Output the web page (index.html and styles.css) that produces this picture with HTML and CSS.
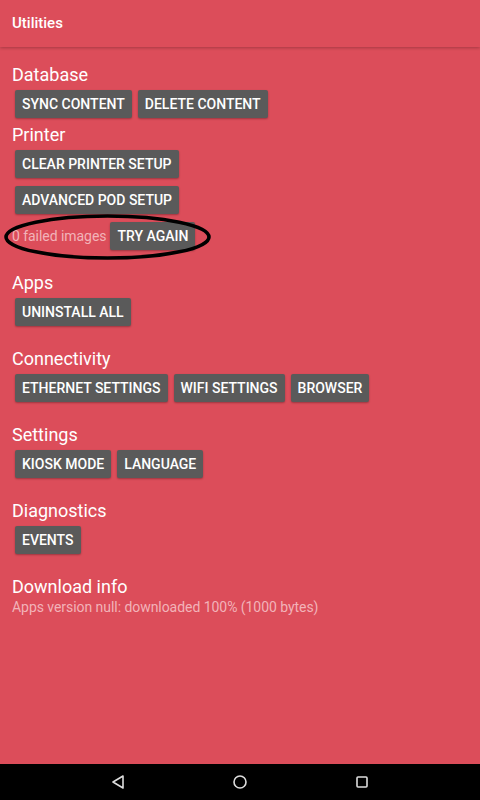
FILE: index.html
```html
<!DOCTYPE html>
<html lang="en">

<head>
    <meta charset="UTF-8">
    <meta name="viewport" content="width=device-width, initial-scale=1.0">
    <title>Utilities</title>
    <link rel="stylesheet" href="styles.css">
</head>

<body>
    <div class="screen">
        <header class="appbar">Utilities</header>

        <main class="content">
            <section class="section tight">
                <h2>Database</h2>
                <div class="rows">
                    <div class="row">
                        <button>SYNC CONTENT</button>
                        <button>DELETE CONTENT</button>
                    </div>
                </div>
            </section>

            <section class="section">
                <h2>Printer</h2>
                <div class="rows">
                    <div class="row"><button>CLEAR PRINTER SETUP</button></div>
                    <div class="row"><button>ADVANCED POD SETUP</button></div>
                    <div class="row failed">
                        <span class="muted">0 failed images</span>
                        <button>TRY AGAIN</button>
                        <svg class="circled" width="212" height="50" viewBox="0 0 212 50">
                            <ellipse cx="103.5" cy="23" rx="101.5" ry="21" fill="none" stroke="#000" stroke-width="3.6" />
                        </svg>
                    </div>
                </div>
            </section>

            <section class="section">
                <h2>Apps</h2>
                <div class="rows">
                    <div class="row"><button>UNINSTALL ALL</button></div>
                </div>
            </section>

            <section class="section">
                <h2>Connectivity</h2>
                <div class="rows">
                    <div class="row">
                        <button>ETHERNET SETTINGS</button>
                        <button>WIFI SETTINGS</button>
                        <button>BROWSER</button>
                    </div>
                </div>
            </section>

            <section class="section">
                <h2>Settings</h2>
                <div class="rows">
                    <div class="row">
                        <button>KIOSK MODE</button>
                        <button>LANGUAGE</button>
                    </div>
                </div>
            </section>

            <section class="section">
                <h2>Diagnostics</h2>
                <div class="rows">
                    <div class="row"><button>EVENTS</button></div>
                </div>
            </section>

            <section class="section">
                <h2>Download info</h2>
                <div class="muted">Apps version null: downloaded 100% (1000 bytes)</div>
            </section>
        </main>

        <nav class="navbar">
            <svg width="14" height="16" viewBox="0 0 14 16">
                <path d="M12 2 L2 8 L12 14 Z" fill="none" stroke="#ddd" stroke-width="1.6" stroke-linejoin="round" />
            </svg>
            <svg width="16" height="16" viewBox="0 0 16 16">
                <circle cx="8" cy="8" r="6" fill="none" stroke="#ddd" stroke-width="1.6" />
            </svg>
            <svg width="14" height="14" viewBox="0 0 14 14">
                <rect x="2" y="2" width="10" height="10" rx="1" fill="none" stroke="#ddd" stroke-width="1.6" />
            </svg>
        </nav>
    </div>
</body>

</html>
```

FILE: styles.css
```css
body {
    margin: 0;
    font-family: Roboto, "Liberation Sans", sans-serif;
    background-color: #000;
}

.screen {
    width: 480px;
    height: 800px;
    display: flex;
    flex-direction: column;
    background-color: #dc4d5a;
    color: #fff;
}

.appbar {
    height: 47px;
    line-height: 47px;
    padding: 0 12px;
    font-size: 15px;
    font-weight: 500;
    box-shadow: 0 1px 3px rgba(0, 0, 0, 0.25);
    position: relative;
    z-index: 1;
}

.content {
    flex: 1;
    padding: 17px 12px 0;
}

.section {
    margin-bottom: 22px;
}

.section.tight {
    margin-bottom: 6px;
}

.section h2 {
    margin: 0;
    font-size: 18px;
    line-height: 22px;
    font-weight: 400;
}

.rows {
    display: flex;
    flex-direction: column;
    gap: 8px;
    margin-top: 4px;
}

.row {
    display: flex;
    align-items: center;
    gap: 6px;
    margin-left: 3px;
}

.row button {
    height: 28px;
    padding: 0 7px;
    border: none;
    border-radius: 2px;
    background-color: #5a5a5a;
    color: #fff;
    font-family: Roboto, "Liberation Sans", sans-serif;
    font-size: 14px;
    font-weight: 500;
    box-shadow: 0 1px 2px rgba(0, 0, 0, 0.3);
}

.muted {
    font-size: 14px;
    line-height: 18px;
    letter-spacing: -0.05px;
    color: #f2b3b9;
}

.row.failed {
    position: relative;
    margin-left: 0;
    gap: 4px;
}

.circled {
    position: absolute;
    left: -8px;
    top: -8px;
}

.navbar {
    height: 36px;
    background-color: #000;
    display: flex;
    align-items: center;
    justify-content: space-around;
    padding: 0 57px;
}

.navbar svg {
    display: block;
}
```
